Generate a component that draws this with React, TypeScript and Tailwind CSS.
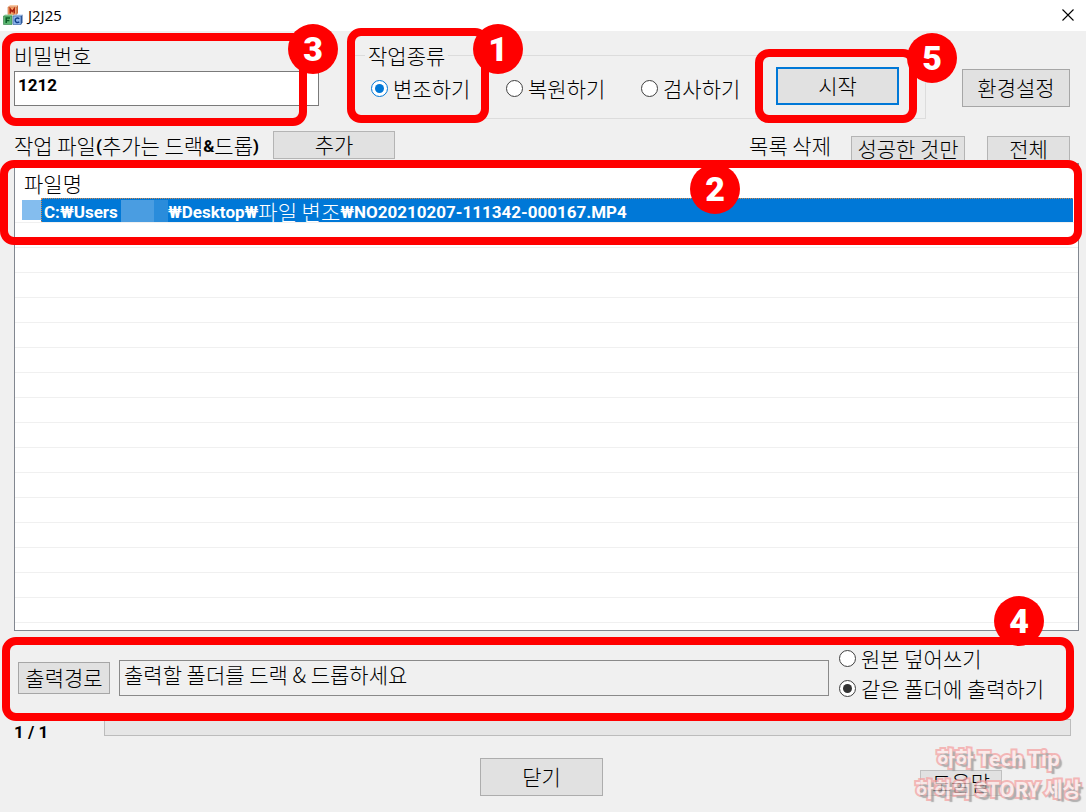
import { useState } from "react"
import type { ReactNode } from "react"
import { clsx } from "clsx"

const ROWS = 16

const modes = ["변조하기", "복원하기", "검사하기"]
const outputs = ["원본 덮어쓰기", "같은 폴더에 출력하기"]

const MfcIcon = () => (
  <svg viewBox="0 0 20 20" className="h-5 w-5" aria-hidden="true">
    <path d="M5 2 7 0h8l-1.500 2z" fill="#f9c9a4" />
    <path d="M5 2h8.500v8H5z" fill="#f8a56c" stroke="#c0683c" strokeWidth=".6" />
    <path d="m13.500 2 1.500-2v8l-1.500 2z" fill="#c86a3c" />
    <path d="M7.200 8.500V4l2 2.500 2-2.500v4.500" fill="none" stroke="#a8200e" strokeWidth="1.500" />
    <path d="m.5 11 1.500-1.500h8L9 11z" fill="#9fdcab" />
    <path d="M.5 11H9v8.500H.5z" fill="#5cb872" stroke="#2b7a42" strokeWidth=".6" />
    <path d="M3.200 18v-5h3.800M3.200 15.500h3.200" fill="none" stroke="#0d5c26" strokeWidth="1.500" />
    <path d="m10 11 1.500-1.500h8L18 11z" fill="#b9d4f7" />
    <path d="M10 11h8v8.500h-8z" fill="#8db4ea" stroke="#2c5a9e" strokeWidth=".6" />
    <path d="m18 11 1.500-1.500v8L18 19.500z" fill="#2a5597" />
    <path d="M16.200 13.800c-1.500-1.500-4-.8-4 1.500s2.500 3 4 1.500" fill="none" stroke="#123f8c" strokeWidth="1.500" />
  </svg>
)

type CalloutProps = { n: number; frame: string; badge: string }

const Callout = ({ n, frame, badge }: CalloutProps) => (
  <div className={clsx("pointer-events-none absolute z-10 rounded-[14px] border-8 border-[#ff0000]", frame)}>
    <span
      className={clsx(
        "absolute flex size-[50px] items-center justify-center rounded-full bg-[#ff0000] font-['Roboto',sans-serif] text-[34px] leading-none font-black text-white",
        badge
      )}
    >
      {n}
    </span>
  </div>
)

const PushButton = ({ className, children }: { className?: string; children: ReactNode }) => (
  <button
    type="button"
    className={clsx("flex shrink-0 items-center justify-center bg-[#e1e1e1] pb-[2px] whitespace-nowrap", className)}
  >
    {children}
  </button>
)

type RadioProps = { name: string; label: string; checked: boolean; onChange: () => void; blue?: boolean }

const Radio = ({ name, label, checked, onChange, blue }: RadioProps) => (
  <label className="flex items-center gap-[5px] whitespace-nowrap">
    <span className="relative flex size-[17px] shrink-0 items-center justify-center">
      <input
        type="radio"
        name={name}
        checked={checked}
        onChange={onChange}
        className={clsx(
          "size-[17px] appearance-none rounded-full border bg-white",
          checked && blue ? "border-[#0078d7]" : "border-[#404040]"
        )}
      />
      {checked && (
        <span className={clsx("absolute size-[9px] rounded-full", blue ? "bg-[#0078d7]" : "bg-[#333333]")} />
      )}
    </span>
    {label}
  </label>
)

const Latin = ({ children }: { children: ReactNode }) => (
  <span className="align-[2px] font-['Roboto','Noto_Sans_CJK_KR',sans-serif] text-[17px] leading-none font-bold">
    {children}
  </span>
)

const App = () => {
  const [mode, setMode] = useState(0)
  const [output, setOutput] = useState(1)
  const [password, setPassword] = useState("1212")

  return (
    <div className="flex min-h-screen flex-col overflow-hidden bg-[#f0f0f0] font-['Noto_Sans_CJK_KR',sans-serif] text-[21px] leading-6 font-light text-black">
      {/* Title bar */}
      <header className="flex h-[31px] items-center justify-between bg-white pr-3 pb-[2px] pl-[3px]">
        <div className="flex items-center gap-[5px]">
          <MfcIcon />
          <h1 className="font-['Open_Sans',sans-serif] text-[15px] font-normal">J2J25</h1>
        </div>
        <button type="button" aria-label="Close">
          <svg viewBox="0 0 12 12" className="size-3" aria-hidden="true">
            <path d="m.5.5 11 11m0-11-11 11" stroke="#000" strokeWidth="1.100" />
          </svg>
        </button>
      </header>

      {/* Password, mode and start */}
      <div className="flex pt-3 pr-4 pl-[14px]">
        <div className="relative w-[305px] shrink-0">
          <label htmlFor="password" className="block">비밀번호</label>
          <input
            id="password"
            type="text"
            value={password}
            onChange={(e) => setPassword(e.target.value)}
            className="mt-1 block h-[35px] w-full border border-[#7a7a7a] bg-white pb-2 pl-[3px] font-['Roboto',sans-serif] text-[17px] font-bold"
          />
          <Callout n={3} frame="-top-[10px] right-3 -bottom-[7px] -left-3" badge="-top-[17px] -right-[39px]" />
        </div>

        <div className="relative mr-9 ml-[31px] flex-1">
          <fieldset className="min-w-0 border border-[#dcdcdc] pb-[9px]">
            <legend className="ml-[14px] px-[3px]">작업종류</legend>
            <div className="flex h-[42px] items-center pl-5">
              {modes.map((label, i) => (
                <div key={label} className="w-[135px]">
                  <Radio name="mode" label={label} checked={mode === i} onChange={() => setMode(i)} blue />
                </div>
              ))}
              <PushButton className="mb-1 h-[38px] w-[123px] border-2 border-[#0078d7]">시작</PushButton>
            </div>
          </fieldset>
          <Callout n={1} frame="-top-[15px] -bottom-1 -left-[3px] w-[142px]" badge="-top-3 -right-[42px]" />
          <Callout n={5} frame="top-[6px] right-[9px] -bottom-1 w-[162px]" badge="-top-6 -right-12" />
        </div>

        <PushButton className="mt-[26px] h-[38px] w-[108px] border border-[#a6a6a6]">환경설정</PushButton>
      </div>

      {/* List tools */}
      <div className="mt-3 flex h-8 items-start justify-between pr-4 pl-[14px]">
        <div className="flex items-center">
          <span className="w-[259px] whitespace-nowrap">
            작업 파일<Latin>(</Latin>추가는 드랙<Latin>&amp;</Latin>드롭<Latin>)</Latin>
          </span>
          <PushButton className="h-7 w-[122px] border border-[#b4b4b4]">추가</PushButton>
        </div>
        <div className="flex items-start">
          <span className="pt-[2px]">목록 삭제</span>
          <PushButton className="mt-[5px] ml-5 h-[26px] w-[114px] border border-[#b4b4b4]">성공한 것만</PushButton>
          <PushButton className="mt-[5px] ml-[22px] h-[26px] w-[83px] border border-[#b4b4b4]">전체</PushButton>
        </div>
      </div>

      {/* File list */}
      <div className="relative mr-[7px] ml-[14px] border border-[#828790] bg-white pb-[7px]">
        <table className="w-full border-separate border-spacing-0">
          <thead>
            <tr>
              <th className="h-[34px] pt-1 pl-[9px] text-left font-light">파일명</th>
            </tr>
          </thead>
          <tbody>
            <tr>
              <td className="h-[25px] border-b border-[#f0f0f0] pr-[5px] pl-[7px]">
                <div className="flex h-6 items-center text-white">
                  <span className="h-5 w-[19px] bg-[#84bdee]" />
                  <div className="flex h-6 flex-1 items-center border-t border-l border-dotted border-[#d08a50] bg-[#0078d7] pl-[2px] whitespace-nowrap">
                    <span className="w-[77px]"><Latin>C:₩Users</Latin></span>
                    <span className="h-[22px] w-[33px] bg-[#4a9de1]" />
                    <span className="h-[22px] w-[14px] bg-[#2a8cdb]" />
                    <span>
                      <Latin>₩Desktop₩</Latin>파일 변조<Latin>₩NO20210207-111342-000167.MP4</Latin>
                    </span>
                  </div>
                </div>
              </td>
            </tr>
            {Array.from({ length: ROWS }, (_, i) => (
              <tr key={i}>
                <td className="h-[25px] border-b border-[#f0f0f0]" />
              </tr>
            ))}
          </tbody>
        </table>
        <Callout n={2} frame="-top-1 -right-[4px] -left-[15px] h-[85px]" badge="-top-1 right-[334px]" />
      </div>

      {/* Output folder */}
      <div className="relative flex pt-3 pr-4 pl-[18px]">
        <div className="flex flex-1 items-center gap-[9px] pt-[10px]">
          <PushButton className="h-8 w-[92px] border border-[#a6a6a6]">출력경로</PushButton>
          <input
            type="text"
            readOnly
            aria-label="출력경로"
            value="출력할 폴더를 드랙 & 드롭하세요"
            className="h-9 min-w-0 flex-1 border border-[#8a8a8a] bg-[#f0f0f0] pb-2 pl-1"
          />
        </div>
        <div className="ml-[10px] w-[231px]">
          {outputs.map((label, i) => (
            <div key={label} className="flex h-[30px] items-center">
              <Radio name="output" label={label} checked={output === i} onChange={() => setOutput(i)} />
            </div>
          ))}
        </div>
        <Callout n={4} frame="top-[6px] right-3 -bottom-[18px] left-[2px]" badge="-top-[49px] right-[22px]" />
      </div>

      {/* Progress */}
      <div className="mt-4 flex h-[25px] items-start pr-[15px] pl-[14px]">
        <span className="w-[90px]"><Latin>1 / 1</Latin></span>
        <progress
          value={0}
          max={1}
          aria-label="1 / 1"
          className="h-[17px] flex-1 appearance-none border border-[#bcbcbc] [&::-webkit-progress-bar]:bg-[#e6e6e6]"
        />
      </div>

      <footer className="relative grid grid-cols-[1fr_auto_1fr] items-start pt-[14px] pr-[3px] pb-4">
        <PushButton className="col-start-2 h-[38px] w-[123px] border border-[#adadad]">닫기</PushButton>
        <PushButton className="mr-[81px] h-[26px] w-[82px] self-end justify-self-end border border-[#c0c0c0]">도움말</PushButton>
        <p className="pointer-events-none absolute right-[5px] bottom-2 flex flex-col items-center text-[20px] leading-[31px] font-bold whitespace-nowrap text-[#fdeaea] opacity-75 [paint-order:stroke_fill] [-webkit-text-stroke:4px_#f5a3a3] [text-shadow:3px_3px_1px_#999]">
          <span>하하 Tech Tip</span>
          <span>하하의 STORY 세상</span>
        </p>
      </footer>
    </div>
  )
}

export default App
